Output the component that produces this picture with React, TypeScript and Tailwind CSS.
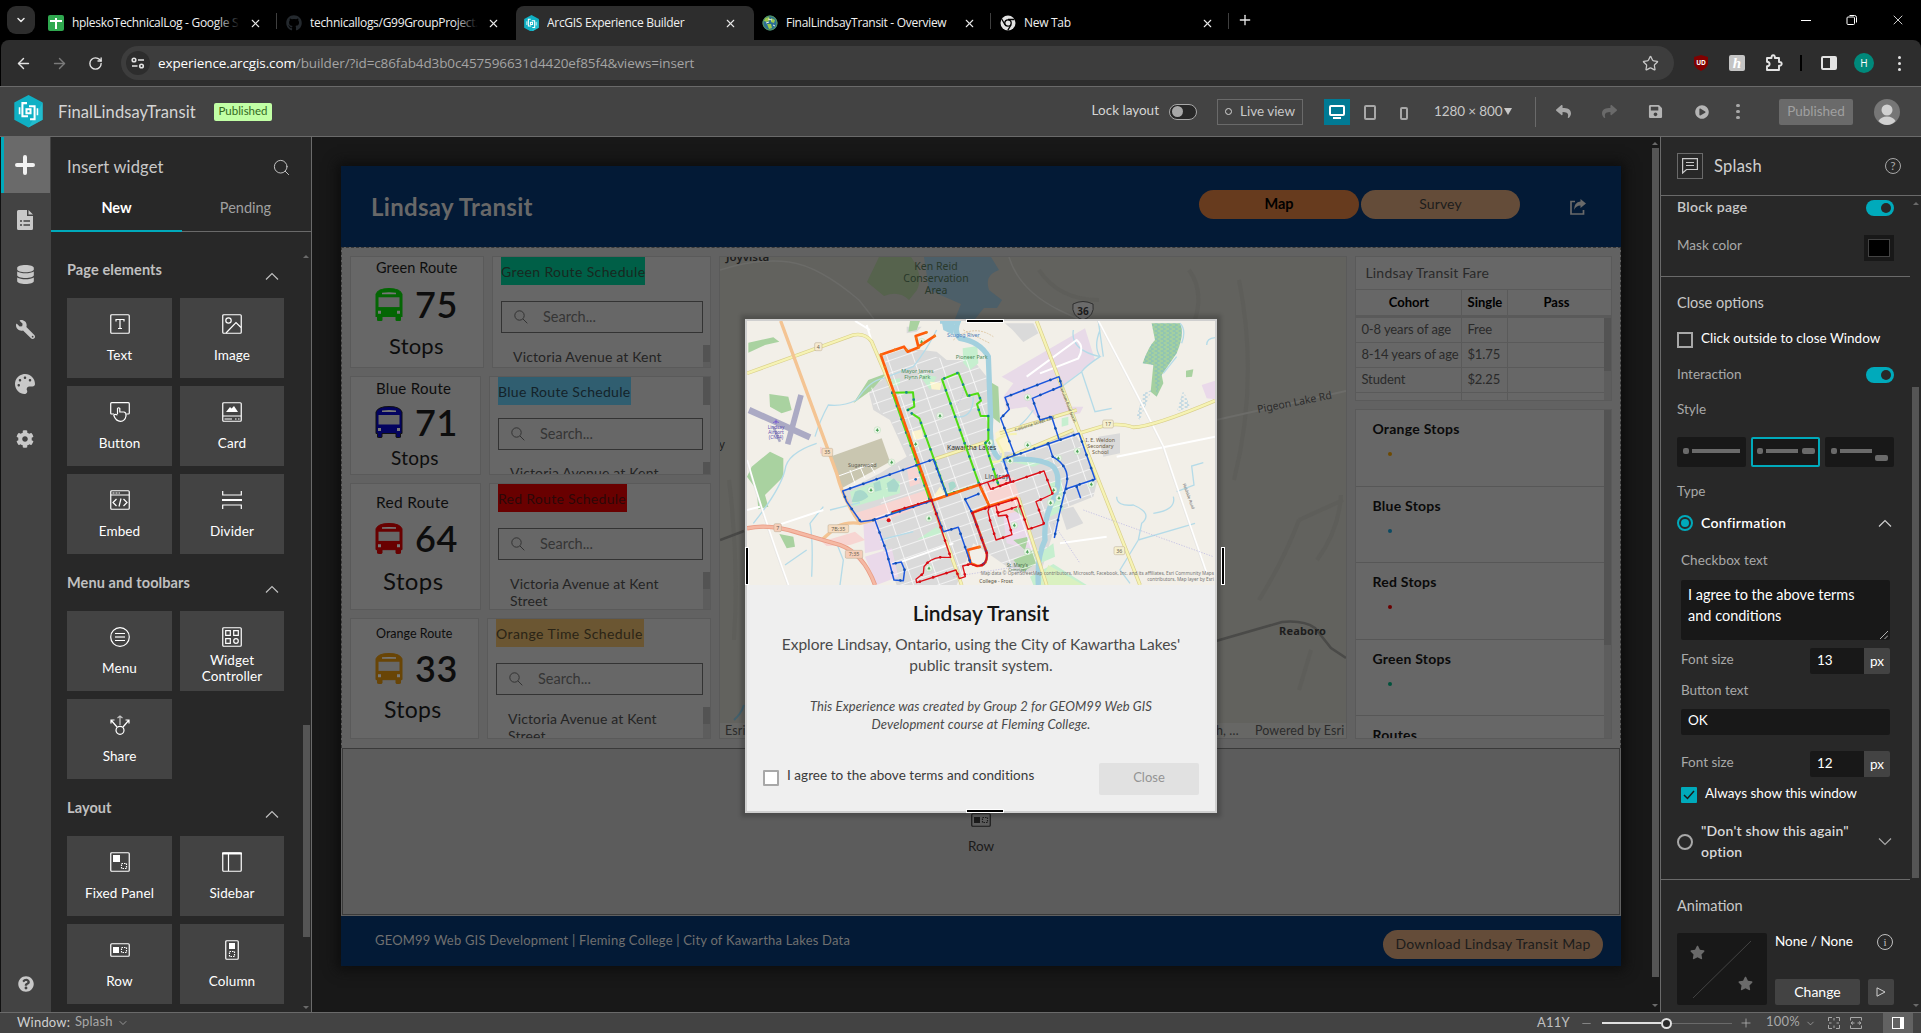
import React from "react";
import { ArrowLeft, ArrowRight, RotateCw, Star, Plus, X, ChevronDown, Search, Minus } from "lucide-react";
import { FaGithub, FaWrench, FaPalette, FaDatabase, FaCog, FaReply, FaShare, FaSave, FaPlayCircle, FaQuestionCircle, FaStar } from "react-icons/fa";

/* ---------- browser chrome ---------- */

function EsriMark({ size }: { size: number }) {
  return (
    <svg width={size} height={size * 1.12} viewBox="0 0 28 32" className="shrink-0">
      <path d="M14 0 L28 7.5 V24.5 L14 32 L0 24.5 V7.5 Z" fill="#0fb0c4" />
      <path d="M14 32 L28 24.5 V7.5 Z" fill="#35c8d8" opacity=".5" />
      <g fill="none" stroke="#fff" strokeWidth="2">
        <path d="M12.500 8 H8 V21 M7 21 H13.500 M15.500 24 H20 V11 M21 11 H14.500" />
        <path d="M5.200 12 V19 M22.800 13 V20" strokeWidth="1.600" />
      </g>
      <rect x="11" y="13" width="6" height="6" fill="#fff" />
      <rect x="13" y="15" width="2" height="2" fill="#0fb0c4" />
    </svg>
  );
}

function SheetsIcon() {
  return (
    <span className="relative h-4 w-4 shrink-0 rounded-[2px] bg-[#2fa84f]">
      <span className="absolute left-[7px] top-[3px] h-[11px] w-[2px] bg-white" />
      <span className="absolute left-[2px] top-[5px] h-[2px] w-3 bg-white" />
    </span>
  );
}

function GlobeIcon() {
  return (
    <svg width="16" height="16" viewBox="0 0 16 16" className="shrink-0">
      <circle cx="8" cy="8" r="7.500" fill="#2b6f93" />
      <path d="M3 3 L7 2 L8 5 L5 7 L2 6 Z M9 3 L13 5 L12 8 L9 7 Z M5 9 L9 9 L10 13 L7 14 Z" fill="#9cc84b" />
      <path d="M4 8 L7 7 M11 10 L13 11 M6 4 L10 5" stroke="#e6eef0" strokeWidth="1" />
      <circle cx="8" cy="8" r="7" fill="none" stroke="#5c9b55" strokeWidth="1" />
    </svg>
  );
}

function ChromeIcon() {
  return (
    <svg width="16" height="16" viewBox="0 0 16 16" className="shrink-0">
      <circle cx="8" cy="8" r="7.500" fill="#e3e3e3" />
      <circle cx="8" cy="8" r="3.200" fill="#e3e3e3" stroke="#000" strokeWidth="1.300" />
      <path d="M8 4.500 H14.500 M5 9.800 L1.700 4 M11 9.800 L7.800 15.400" stroke="#000" strokeWidth="1.300" />
    </svg>
  );
}

function Tab({ icon, title, active, fade, sep }: { icon: React.ReactNode; title: string; active?: boolean; fade?: boolean; sep?: boolean }) {
  return (
    <div className={active ? "relative flex h-[34px] w-[238px] items-center rounded-t-lg bg-[#2d2d2d] pl-2" : "relative flex h-[34px] w-[238px] items-center pl-2"}>
      {icon}
      <div className="relative mb-px ml-2 w-[168px] overflow-hidden whitespace-nowrap text-[12px] tracking-[-0.3px] text-[#f0f0f0]">
        {title}
        {fade && <span className="absolute right-0 top-0 h-full w-6 bg-gradient-to-r from-transparent to-black" />}
      </div>
      <X size={13} strokeWidth={2} className="ml-[9px] text-[#e8e8e8]" />
      {sep && <span className="absolute right-[1px] top-[7px] h-4 w-px bg-[#3f3f3f]" />}
    </div>
  );
}

function Browser() {
  return (
    <div className="font-['Open_Sans',sans-serif]">
      <div className="flex h-10 items-end bg-black">
        <div className="mb-[6px] ml-[7px] flex h-7 w-[28px] items-center justify-center rounded-[9px] bg-[#2d2d2d]">
          <ChevronDown size={12} strokeWidth={3} className="text-[#e8e8e8]" />
        </div>
        <div className="ml-[5px] flex">
          <Tab icon={<SheetsIcon />} title="hpleskoTechnicalLog - Google S" fade sep />
          <Tab icon={<FaGithub size={16} className="shrink-0 text-[#24292e]" />} title="technicallogs/G99GroupProject." fade />
          <Tab icon={<EsriMark size={15} />} title="ArcGIS Experience Builder" active />
          <Tab icon={<GlobeIcon />} title="FinalLindsayTransit - Overview" sep />
          <Tab icon={<ChromeIcon />} title="New Tab" sep />
        </div>
        <Plus size={16} strokeWidth={2} className="mb-[12px] ml-[7px] text-[#e8e8e8]" />
        <div className="ml-auto mr-[15px] flex h-10 items-center text-white">
          <span className="h-px w-[10px] bg-white" />
          <svg width="12" height="12" viewBox="0 0 12 12" fill="none" stroke="#fff" className="ml-[35px]">
            <rect x="1" y="3" width="7.500" height="7.500" rx="1" />
            <path d="M3.500 1.500 H8.500 Q10.500 1.500 10.500 3.500 V8.500" />
          </svg>
          <X size={16} strokeWidth={1.2} className="ml-[32px]" />
        </div>
      </div>
      <div className="bg-black pl-px">
        <div className="flex h-[46px] items-center rounded-t-lg bg-[#2d2d2d] text-[#e3e3e3]">
          <ArrowLeft size={17} strokeWidth={2} className="ml-[14px]" />
          <ArrowRight size={17} strokeWidth={2} className="ml-[19px] text-[#7a7a7a]" />
          <RotateCw size={15} strokeWidth={2.2} className="ml-[20px]" />
          <div className="ml-[18px] flex h-[34px] w-[1553px] items-center rounded-full bg-[#3d3d3d]">
            <span className="ml-[5px] flex h-6 w-6 items-center justify-center rounded-full bg-[#2d2d2d]">
              <svg width="14" height="12" viewBox="0 0 14 12" fill="none" stroke="#e3e3e3" strokeWidth="1.600">
                <circle cx="3" cy="3" r="1.800" /><path d="M7 3 H13 M1 9 H6.500" /><circle cx="10.500" cy="9" r="1.800" />
              </svg>
            </span>
            <span className="ml-[8px] whitespace-nowrap text-[13.5px] tracking-[-0.11px] text-[#a4a4a4]">
              <span className="text-white">experience.arcgis.com</span>/builder/?id=c86fab4d3b0c457596631d4420ef85f4&amp;views=insert
            </span>
            <Star size={17} strokeWidth={1.8} className="ml-auto mr-[15px] text-[#c7c7c7]" />
          </div>
          <svg width="14" height="16" viewBox="0 0 14 16" className="ml-[20px]">
            <path d="M7 0 L14 2 V9 Q13 13 7 16 Q1 13 0 9 V2 Z" fill="#800000" />
            <text x="7" y="9.500" fontSize="6.500" fontWeight="700" fill="#fff" textAnchor="middle" fontFamily="Open Sans">UD</text>
          </svg>
          <span className="ml-[21px] flex h-4 w-4 items-center justify-center rounded-[2px] bg-[#c4c4c4] font-['Liberation_Serif',serif] text-[15px] font-bold italic leading-4 text-white">h</span>
          <svg width="18" height="18" viewBox="0 0 18 18" className="ml-[20px]">
            <path d="M2 4 H6.500 Q6.300 1.300 8.200 1.300 Q10.100 1.300 9.900 4 H14 V8 Q16.700 7.800 16.700 9.800 Q16.700 11.800 14 11.600 V16 H2 V12.300 Q4.600 12 4.600 10 Q4.600 8 2 7.700Z" fill="none" stroke="#e3e3e3" strokeWidth="1.900" strokeLinejoin="round" />
          </svg>
          <span className="ml-[17px] h-4 w-[2px] bg-black" />
          <svg width="16" height="14" viewBox="0 0 16 14" className="ml-[19px]">
            <rect x="1" y="1" width="14" height="12" rx="1" fill="none" stroke="#e3e3e3" strokeWidth="2" />
            <rect x="9" y="1" width="6" height="12" fill="#e3e3e3" />
          </svg>
          <span className="ml-[17px] flex h-5 w-5 items-center justify-center rounded-full bg-[#00897b] text-[10px] text-white">H</span>
          <span className="ml-[24px] flex flex-col gap-[3px]">
            <i className="h-[3px] w-[3px] rounded-full bg-[#e3e3e3]" />
            <i className="h-[3px] w-[3px] rounded-full bg-[#e3e3e3]" />
            <i className="h-[3px] w-[3px] rounded-full bg-[#e3e3e3]" />
          </span>
        </div>
      </div>
    </div>
  );
}

/* ---------- builder header ---------- */

function BuilderHeader() {
  return (
    <div className="flex h-[51px] items-center border-b border-t border-[#6a6a6a] bg-[#434343] text-[#c8c8c8]">
      <span className="ml-[14px] flex"><EsriMark size={29} /></span>
      <span className="ml-[15px] mt-[2px] w-[141px] whitespace-nowrap text-[16.5px] tracking-[0.1px] text-[#d5d5d5]">FinalLindsayTransit</span>
      <span className="ml-[15px] flex h-[18px] w-[58px] items-center justify-center rounded-[2px] bg-[#c1ffa5] pb-px text-[11.5px] text-[#33691e]">Published</span>
      <span className="mb-[3px] ml-auto whitespace-nowrap text-[13.5px] text-[#d5d5d5]">Lock layout</span>
      <span className="ml-[10px] flex h-4 w-[28px] items-center rounded-full border border-[#a8a8a8] bg-[#282828] pl-[2px]">
        <i className="h-[11px] w-[11px] rounded-full bg-[#a8a8a8]" />
      </span>
      <span className="ml-[20px] flex h-[26px] w-[86px] items-center justify-center border border-[#6a6a6a] text-[13.5px]">
        <i className="mr-[8px] h-[7px] w-[7px] rounded-full border border-[#d5d5d5]" />Live view
      </span>
      <span className="ml-[21px] flex h-[26px] w-[26px] items-center justify-center bg-[#007a94]">
        <svg width="16" height="14" viewBox="0 0 16 14"><rect x="1" y="1" width="14" height="9" rx="1" fill="none" stroke="#fff" strokeWidth="2" /><path d="M4 13 H12" stroke="#fff" strokeWidth="2" /></svg>
      </span>
      <i className="ml-[14px] mt-[2px] h-[15px] w-[12px] rounded-[2px] border-2 border-[#a8a8a8]" />
      <i className="ml-[24px] mt-[3px] h-[13px] w-[8px] rounded-[2px] border-2 border-[#a8a8a8]" />
      <span className="ml-[26px] w-[70px] whitespace-nowrap text-[13.5px] tracking-[-0.1px]">1280 × 800</span>
      <i className="border-x-[4px] border-t-[7px] border-x-transparent border-t-[#c8c8c8]" />
      <i className="ml-[23px] h-[30px] w-px bg-[#6a6a6a]" />
      <FaReply size={15} className="ml-[20px] text-[#a8a8a8]" />
      <FaShare size={15} className="ml-[31px] text-[#6a6a6a]" />
      <FaSave size={15} className="ml-[31px] text-[#b4b4b4]" />
      <FaPlayCircle size={14} className="ml-[32px] text-[#b4b4b4]" />
      <span className="ml-[27px] flex flex-col gap-[3px]">
        <i className="h-[3px] w-[4px] rounded-full bg-[#a8a8a8]" />
        <i className="h-[3px] w-[4px] rounded-full bg-[#a8a8a8]" />
        <i className="h-[3px] w-[4px] rounded-full bg-[#a8a8a8]" />
      </span>
      <span className="ml-[39px] flex h-[26px] w-[74px] items-center justify-center rounded-[2px] bg-[#6a6a6a] pb-px text-[13.5px] text-[#a0a0a0]">Published</span>
      <svg width="26" height="26" viewBox="0 0 26 26" className="ml-[21px] mr-[21px]">
        <circle cx="13" cy="13" r="13" fill="#767676" />
        <circle cx="13" cy="11" r="5.500" fill="#d0d0d0" />
        <path d="M4.500 22 Q7 17.500 13 17.500 Q19 17.500 21.500 22 Q18 26 13 26 Q8 26 4.500 22Z" fill="#d0d0d0" />
      </svg>
    </div>
  );
}

/* ---------- left side ---------- */

function Rail() {
  return (
    <div className="flex w-[51px] shrink-0 flex-col border-l border-[#111] bg-[#434343] text-[#c8c8c8]">
      <div className="flex h-[56px] w-[49px] items-center justify-center border-l-[3px] border-[#00aabb] bg-[#6a6a6a] pr-[4px]">
        <svg width="20" height="20" viewBox="0 0 20 20"><path d="M10 2 V18 M2 10 H18" stroke="#f2f2f2" strokeWidth="4" strokeLinecap="round" /></svg>
      </div>
      <div className="flex h-[54px] w-[48px] items-center justify-center">
        <svg width="16" height="20" viewBox="0 0 16 20">
          <path d="M1.500 0 H10 V6 H16 V18.500 Q16 20 14.500 20 H1.500 Q0 20 0 18.500 V1.500 Q0 0 1.500 0Z M11.500 0 L16 4.500 H11.500Z" fill="#c8c8c8" />
          <path d="M3 11 H5 M6.500 11 H13 M3 15 H5 M6.500 15 H13" stroke="#434343" strokeWidth="1.500" />
        </svg>
      </div>
      <div className="flex h-[55px] w-[48px] items-center justify-center"><FaDatabase size={19} /></div>
      <div className="flex h-[54px] w-[48px] items-center justify-center"><span className="-scale-x-100"><FaWrench size={19} /></span></div>
      <div className="flex h-[55px] w-[48px] items-center justify-center"><FaPalette size={20} /></div>
      <div className="flex h-[55px] w-[48px] items-center justify-center"><FaCog size={18} /></div>
      <div className="mb-[20px] ml-[17px] mt-auto"><FaQuestionCircle size={16} /></div>
    </div>
  );
}

const box = <rect x=".75" y=".75" width="18.500" height="18.500" rx="1" />;
const GLYPHS: Record<string, React.ReactNode> = {
  Text: <>{box}<path d="M6 7.500 V5.500 H14 V7.500 M10 5.500 V14.500 M8 14.500 H12" /></>,
  Image: <>{box}<circle cx="6.500" cy="6.500" r="2.700" /><path d="M4 19 L14 8.500 L19 13.500" /></>,
  Button: <><path d="M4 12 H1.700 Q.7 12 .7 11 V1.700 Q.7 .7 1.700 .7 H18.300 Q19.300 .7 19.300 1.700 V11 Q19.300 12 18.300 12 H16.500" /><path d="M7.500 12 V6.500 Q8.500 5 9.800 6.500 V10 H14 Q16.500 10.500 16 14 Q15 19.300 10.500 19.300 Q6 19.300 3.800 13.500 Q4.500 11.500 7.500 13" /></>,
  Card: <>{box}<path d="M4 10 L8 5 L9.500 6.500 L12 4 L16 10Z" fill="currentColor" stroke="none" /><path d="M1 14 H19 M2.500 17 H10 M13 17 H14.500 M16 17 H17.500" /></>,
  Embed: <>{box}<path d="M1 5 H19 M2.500 3 H4.500 M5.500 3 H7.500 M8.500 3 H10" /><path d="M6.500 9 L3 12.500 L6.500 16 M13.500 9 L17 12.500 L13.500 16 M11 8.500 L9 16.500" /></>,
  Divider: <><path d="M.7 1 V5 H19.300 V1 M.7 19 V15 H19.300 V19" /><path d="M0 10 H20" strokeWidth="2" /></>,
  Menu: <><circle cx="10" cy="10" r="9.300" /><path d="M5 6.500 H15 M5 13.500 H15" /><path d="M5 10 H15" strokeWidth="2" opacity=".6" /></>,
  Widget: <>{box}<path d="M3.700 3.700 H8.300 V8.300 H3.700Z M11.700 3.700 H16.300 V8.300 H11.700Z M3.700 11.700 H8.300 V16.300 H3.700Z" /><circle cx="14" cy="14" r="2.300" /></>,
  Share: <><circle cx="10" cy="15.300" r="4" /><path d="M7 12 L1 5 M1 8.500 V5 H4.500 M13 12 L19 5 M19 8.500 V5 H15.500" /><path d="M10 10 V1.500 M7.500 3 L10 1 L12.500 3" opacity=".7" /></>,
  Fixed: <>{box}<path d="M3 3 H10 V10 H3Z" fill="currentColor" stroke="none" /><rect x="11.500" y="11.500" width="5" height="5" strokeDasharray="1.500 1" /></>,
  Sidebar: <>{box}<path d="M0 1.500 H20" strokeWidth="2" /><path d="M6.500 1 V19" /></>,
  Row: <><rect x=".75" y="3.750" width="18.500" height="12.500" rx="1" /><path d="M3 7 H9 V13 H3Z" fill="currentColor" stroke="none" /><rect x="11.500" y="7.500" width="5" height="5" strokeDasharray="1.500 1" /></>,
  Column: <><rect x="3.750" y=".75" width="12.500" height="18.500" rx="1" /><path d="M7 3 H13 V9 H7Z" fill="currentColor" stroke="none" /><rect x="7.500" y="11.500" width="5" height="5" strokeDasharray="1.500 1" /></>,
};

function Glyph({ name }: { name: string }) {
  return (
    <svg width="20" height="20" viewBox="0 0 20 20" fill="none" stroke="currentColor" strokeWidth="1.200" className="shrink-0">
      {GLYPHS[name]}
    </svg>
  );
}

function Tile({ g, label }: { g: string; label: string }) {
  return (
    <div className="flex h-20 flex-col items-center bg-[#434343] pt-4 text-white">
      <Glyph name={g} />
      <div className="mt-[5px] flex h-8 w-[80px] items-center justify-center text-center text-[13.5px] leading-4 tracking-[0.1px]">{label}</div>
    </div>
  );
}

function Section({ title, tiles }: { title: string; tiles: [string, string][] }) {
  return (
    <div>
      <div className="flex h-[57px] items-center justify-between pr-[6px]">
        <span className="text-[14.5px] font-bold tracking-[0.1px] text-[#c0c0c0]">{title}</span>
        <svg width="14" height="8" viewBox="0 0 14 8" className="mt-[12px]"><path d="M1 7.500 L7 1.500 L13 7.500" fill="none" stroke="#c0c0c0" strokeWidth="1.200" /></svg>
      </div>
      <div className="grid grid-cols-[105px_104px] gap-2">
        {tiles.map(([g, l]) => <Tile key={l} g={g} label={l} />)}
      </div>
    </div>
  );
}

function InsertPanel() {
  return (
    <div className="flex w-[261px] shrink-0 flex-col border-r border-[#6a6a6a] bg-[#282828]">
      <div className="flex h-[60px] items-center justify-between pl-4 pr-[20px] pt-px">
        <span className="text-[16.5px] tracking-[0.15px] text-[#c8c8c8]">Insert widget</span>
        <Search size={19} strokeWidth={1.2} className="text-[#c8c8c8]" />
      </div>
      <div className="flex h-[35px] text-[14.5px]">
        <div className="flex w-[131px] items-start justify-center border-b-2 border-[#00aabb] font-bold text-white">New</div>
        <div className="flex flex-1 items-start justify-center border-b border-[#6a6a6a] pr-[2px] text-[#a0a0a0]">Pending</div>
      </div>
      <div className="flex min-h-0 flex-1 overflow-hidden">
        <div className="w-[234px] pl-4 pt-[9px]">
          <Section title="Page elements" tiles={[["Text", "Text"], ["Image", "Image"], ["Button", "Button"], ["Card", "Card"], ["Embed", "Embed"], ["Divider", "Divider"]]} />
          <Section title="Menu and toolbars" tiles={[["Menu", "Menu"], ["Widget", "Widget Controller"], ["Share", "Share"]]} />
          <Section title="Layout" tiles={[["Fixed", "Fixed Panel"], ["Sidebar", "Sidebar"], ["Row", "Row"], ["Column", "Column"]]} />
        </div>
        <div className="ml-auto mr-px flex w-[8px] flex-col items-center">
          <i className="mt-[23px] border-x-[3px] border-b-[3px] border-x-transparent border-b-[#6a6a6a]" />
          <i className="mt-[467px] h-[212px] w-[7px] bg-[#555]" />
          <i className="mt-[69px] border-x-[3px] border-t-[3px] border-x-transparent border-t-[#6a6a6a]" />
        </div>
      </div>
    </div>
  );
}

/* ---------- page under the mask ---------- */

function Bus({ color, edge, h }: { color: string; edge: string; h: number }) {
  return (
    <svg width="28" height={h} viewBox="0 0 28 32" preserveAspectRatio="none">
      <path d="M1 6 Q3 .5 14 .5 Q25 .5 27 6 V27.500 H25.500 V31 Q25.500 31.500 24.500 31.500 H22 Q21 31.500 21 31 V27.500 H7 V31 Q7 31.500 6 31.500 H3.500 Q2.500 31.500 2.500 31 V27.500 H1Z" fill={color} stroke={edge} />
      <path d="M3.500 9 H24.500 V18.500 H3.500Z" fill="#676767" />
      <path d="M7 4.500 Q14 3.500 21 4.500 V6 H7Z M3 22 H6 V25 H3Z M22 22 H25 V25 H22Z" fill="#777" />
    </svg>
  );
}

type RouteProps = {
  name: string; nameCls: string; num: string; stopsCls: string; fill: string; edge: string; bus: number;
  cardCls: string; rowCls: string; numCls: string; schedule: string; labelCls: string; searchCls: string; body: string; bodyCls: string; thumb: string; topThumb?: boolean;
};

function RouteRow(p: RouteProps) {
  return (
    <div className={p.rowCls}>
      <div className={p.cardCls}>
        <div className={p.nameCls}>{p.name}</div>
        <div className={p.numCls}>
          <Bus color={p.fill} edge={p.edge} h={p.bus} />
          <span className="ml-[12px] text-[36px] font-semibold leading-[32px] tracking-[0.5px]">{p.num}</span>
        </div>
        <div className={p.stopsCls}>Stops</div>
      </div>
      <div className="relative flex-1 overflow-hidden border border-[#5a5a5a] bg-[#676767] pl-2">
        <div className={p.labelCls}>{p.schedule}</div>
        <div className={p.searchCls}>
          <svg width="14" height="14" viewBox="0 0 14 14" fill="none" stroke="#333" className="ml-[12px]"><circle cx="5.500" cy="5.500" r="4.700" /><path d="M9 9 L13.300 13.300" /></svg>
          <span className="ml-[15px] text-[14.5px] text-[#353535]">Search...</span>
        </div>
        <div className={p.bodyCls}>{p.body}</div>
        {p.topThumb && <i className="absolute right-0 top-0 h-[28px] w-[7px] bg-[#535353]" />}
        <span className={p.thumb}><i className="h-[17px] bg-[#535353]" /></span>
      </div>
    </div>
  );
}

function PageMap() {
  return (
    <svg width="626" height="481" viewBox="721 257 626 481" className="block" fontFamily="Noto Sans, sans-serif">
      <rect x="721" y="257" width="626" height="481" fill="#62625e" />
      <g stroke="#5d5d59" strokeWidth="4" fill="none" opacity=".7">
        <path d="M1190 270 Q1205 290 1196 320 M1240 280 Q1260 380 1235 480 M1300 520 L1344 500 M1318 560 Q1340 530 1342 495 M1300 690 L1312 650 M1260 600 Q1285 560 1300 520 M1040 270 Q1060 300 1100 300 M730 480 Q740 560 735 640" />
      </g>
      <path d="M880 257 H912 Q925 275 918 290 L910 300 Q900 290 885 296 L868 282 Z" fill="#56634d" />
      <path d="M925 257 H992 L1000 270 Q985 275 990 290 L1003 300 L998 308 H985 L976 319 H956 L962 304 L930 290 Z" fill="#4c5f69" />
      <path d="M721 270 Q760 258 790 262 T860 300 L875 319 M1010 257 Q1020 290 1060 310 T1200 360" fill="none" stroke="#6b6b68" strokeWidth="1.500" />
      <path d="M1217 420 L1347 391" stroke="#6c6c69" strokeWidth="2" />
      <path d="M721 540 L745 531" stroke="#484846" strokeWidth="2.500" />
      <path d="M1217 641 L1283 622 Q1305 620 1316 628 L1332 648 L1347 658" stroke="#4a4a48" strokeWidth="2.500" fill="none" />
      <path d="M735 720 Q742 714 745 705" stroke="#42606d" strokeWidth="2" fill="none" />
      <path d="M1074 304 Q1084 299 1094 304 Q1096 316 1084 320 Q1072 316 1074 304Z" fill="#6b6b6b" stroke="#2f2f2f" />
      <g fill="#1d1d1d" fontSize="11.500">
        <text x="727" y="261" fontWeight="600">Joyvista</text>
        <g fill="#28382a" textAnchor="middle" fontSize="10.500">
          <text x="937" y="270">Ken Reid</text><text x="937" y="282">Conservation</text><text x="937" y="294">Area</text>
        </g>
        <text x="1084" y="315" textAnchor="middle" fontSize="10" fontWeight="700">36</text>
        <text x="1259" y="413" transform="rotate(-11 1259 413)" fill="#2b2b2b" fontSize="10.500">Pigeon Lake Rd</text>
        <text x="1280" y="635" fontWeight="700" letterSpacing=".2" fontSize="11">Reaboro</text>
        <text x="720" y="448">y</text>
      </g>
      <rect x="721" y="723" width="626" height="15" fill="#676765" />
      <g fill="#2b2b2b" fontSize="12.500" fontFamily="Lato" letterSpacing=".1">
        <text x="726" y="735">Esri</text><text x="1217" y="735">h, …</text><text x="1256" y="735">Powered by Esri</text>
      </g>
    </svg>
  );
}

function FareTable() {
  const rows = [["0-8 years of age", "Free"], ["8-14 years of age", "$1.75"], ["Student", "$2.25"], ["", ""]];
  return (
    <div className="h-[145px] overflow-hidden border border-[#5a5a5a] bg-[#676767] text-[13px] text-[#2a2a2a]">
      <div className="flex h-[32px] items-center pb-[2px] pl-[9px] text-[14px] tracking-[0.2px]">Lindsay Transit Fare</div>
      <div className="flex h-[29px] border-b-[3px] border-t border-[#5a5a5a] font-bold text-black">
        <div className="flex w-[106px] items-center justify-center border-r border-[#5a5a5a]">Cohort</div>
        <div className="flex w-[46px] items-center justify-center border-r border-[#5a5a5a]">Single</div>
        <div className="flex w-[96px] items-center justify-center">Pass</div>
      </div>
      <div className="flex">
        <div className="flex-1">
          {rows.map(([a, b], i) => (
            <div key={i} className="flex h-[25px] border-b border-[#5a5a5a] tracking-[-0.1px]">
              <div className="flex w-[106px] items-center whitespace-nowrap border-r border-[#5a5a5a] pl-[5px]">{a}</div>
              <div className="flex w-[46px] items-center border-r border-[#5a5a5a] pl-[5px]">{b}</div>
            </div>
          ))}
        </div>
        <div className="w-[7px] bg-[#5d5d5d]"><div className="h-[53px] bg-[#535353]" /></div>
      </div>
    </div>
  );
}

function Legend() {
  const items = [["Orange Stops", "bg-[#6e4a00]"], ["Blue Stops", "bg-[#0b4a63]"], ["Red Stops", "bg-[#6b0000]"], ["Green Stops", "bg-[#00523c]"], ["Routes", "bg-transparent"]];
  return (
    <div className="flex h-[330px] overflow-hidden border border-[#5a5a5a] bg-[#676767]">
      <div className="flex-1">
        {items.map(([t, c]) => (
          <div key={t} className="h-[76.5px] border-b border-[#575757] pl-[16px] pt-[9px]">
            <div className="text-[14px] font-bold leading-[20px] tracking-[0.25px] text-[#0a0a0a]">{t}</div>
            <i className={`ml-[16px] mt-[13px] block h-1 w-1 rounded-full ${c}`} />
          </div>
        ))}
      </div>
      <div className="w-[7px] bg-[#5d5d5d]"><div className="h-[235px] bg-[#535353]" /></div>
    </div>
  );
}

const THUMB = "absolute right-0 bottom-0 flex w-[7px] flex-col bg-[#5d5d5d]";

function PreviewPage() {
  return (
    <div className="flex h-[800px] w-[1280px] flex-col bg-[#606060] shadow-[0_0_12px_4px_#0d0d0d]">
      <div className="flex h-[81px] items-center bg-[#031a36]">
        <span className="ml-[30px] text-[24px] font-bold tracking-[0.3px] text-[#686868]">Lindsay Transit</span>
        <span className="mb-[4px] ml-auto flex h-[29px] w-[160px] items-center justify-center rounded-full bg-[#673b1e] pb-[2px] text-[14.5px] font-bold text-black">Map</span>
        <span className="mb-[4px] ml-[2px] flex h-[29px] w-[159px] items-center justify-center rounded-full bg-[#644c39] pb-[2px] text-[14px] tracking-[0.1px] text-[#1c1c1c]">Survey</span>
        <svg width="16" height="16" viewBox="0 0 16 16" className="ml-[50px] mr-[35px]">
          <path d="M5 2.500 H1 V15 H13.500 V11" fill="none" stroke="#6a6a6a" strokeWidth="1.700" />
          <path d="M10.500 0 L16 4.500 L10.500 9 V6.500 Q6 6.500 4 11 Q4 3 10.500 2.500Z" fill="#6a6a6a" />
        </svg>
      </div>
      <div className="flex h-[501px] gap-2 border border-b-0 border-dashed border-[#383838] bg-[#626262] px-2 pt-[8px]">
        <div className="flex w-[362px] flex-col gap-2">
          <RouteRow name="Green Route" num="75" schedule="Green Route Schedule" fill="#046604" edge="#046604" bus={33}
            rowCls="flex h-[112px] gap-2" cardCls="w-[134px] border border-[#5a5a5a] bg-[#676767] text-[#0d0d0d]"
            nameCls="mt-px pl-[25px] text-[14.5px] leading-[20px] tracking-[0.1px]" numCls="mt-[9px] flex h-[34px] items-center pl-[24px]"
            stopsCls="pt-[11px] pl-[38px] text-[22px] leading-[28px] tracking-[0.2px]"
            labelCls="h-[28px] w-[144px] whitespace-nowrap bg-[#005f47] text-[14px] leading-[29px] tracking-[0.38px] text-[#182820]"
            searchCls="mt-4 flex h-[32px] w-[202px] items-center border border-[#333]"
            body="Victoria Avenue at Kent" bodyCls="ml-[12px] mt-[15px] text-[14px] leading-[17px] tracking-[0.15px] text-[#242424]" thumb={`${THUMB} h-[22px]`} />
          <RouteRow name="Blue Route" num="71" schedule="Blue Route Schedule" fill="#030360" edge="#111" bus={32} topThumb
            rowCls="flex h-[99px] gap-2" cardCls="w-[131px] border border-[#5a5a5a] bg-[#676767] text-[#0d0d0d]"
            nameCls="mt-px pl-[25px] text-[15px] leading-[20px] tracking-[0.3px]" numCls="mt-[7px] flex h-[34px] items-center pl-[24px]"
            stopsCls="pt-[6px] pl-[40px] text-[19px] leading-[26px] tracking-[0.3px]"
            labelCls="h-[28px] w-[133px] whitespace-nowrap bg-[#305e70] text-[14px] leading-[29px] tracking-[0.3px] text-[#14232a]"
            searchCls="mt-[13px] flex h-[32px] w-[205px] items-center border border-[#333]"
            body="Victoria Avenue at Kent" bodyCls="ml-[12px] mt-[14px] text-[14px] leading-[17px] tracking-[0.15px] text-[#242424]" thumb={`${THUMB} h-[12px]`} />
          <RouteRow name="Red Route" num="64" schedule="Red Route Schedule" fill="#690000" edge="#690000" bus={31}
            rowCls="flex h-[127px] gap-2" cardCls="w-[131px] border border-[#5a5a5a] bg-[#676767] text-[#0d0d0d]"
            nameCls="mt-[8px] pl-[25px] text-[15.5px] leading-[20px] tracking-[0.3px]" numCls="mt-[9px] flex h-[34px] items-center pl-[24px]"
            stopsCls="pt-[12px] pl-[32px] text-[24px] leading-[28px] tracking-[0.4px]"
            labelCls="h-[28px] w-[129px] whitespace-nowrap bg-[#690000] text-[14px] leading-[29px] tracking-[0.28px] text-[#2c0808]"
            searchCls="mt-4 flex h-[32px] w-[205px] items-center border border-[#333]"
            body="Victoria Avenue at Kent Street" bodyCls="ml-[12px] w-[160px] mt-[15px] text-[14px] leading-[17px] tracking-[0.15px] text-[#242424]" thumb={`${THUMB} h-[37px]`} />
          <RouteRow name="Orange Route" num="33" schedule="Orange Time Schedule" fill="#694506" edge="#694506" bus={31}
            rowCls="flex h-[121px] gap-2" cardCls="w-[129px] border border-[#5a5a5a] bg-[#676767] text-[#0d0d0d]"
            nameCls="mt-[5px] pl-[25px] text-[12.5px] leading-[20px]" numCls="mt-[7px] flex h-[34px] items-center pl-[24px]"
            stopsCls="pt-[10px] pl-[33px] text-[23px] leading-[28px] tracking-[0.3px]"
            labelCls="h-[28px] w-[148px] whitespace-nowrap bg-[#6b5632] text-[14px] leading-[29px] tracking-[0.42px] text-[#2a2416]"
            searchCls="mt-4 flex h-[32px] w-[207px] items-center border border-[#333]"
            body="Victoria Avenue at Kent Street" bodyCls="ml-[12px] w-[160px] mt-[15px] text-[14px] leading-[17px] tracking-[0.15px] text-[#242424]" thumb={`${THUMB} h-[31px]`} />
        </div>
        <div className="h-[483px] w-[628px] border border-[#5a5a5a]"><PageMap /></div>
        <div className="flex w-[257px] flex-col gap-2">
          <FareTable />
          <Legend />
        </div>
      </div>
      <div className="mx-px flex h-[167px] flex-col items-center border border-[#3a3a3a] bg-[#5c5c5c] pt-[61px] text-[#1a1a1a]">
        <Glyph name="Row" />
        <span className="mt-[7px] text-[13.5px] leading-[18px]">Row</span>
      </div>
      <div className="mt-px flex h-[50px] items-center bg-[#031a36]">
        <span className="ml-[34px] whitespace-nowrap text-[13px] tracking-[0.2px] text-[#707070]">GEOM99 Web GIS Development | Fleming College | City of Kawartha Lakes Data</span>
        <span className="ml-auto mr-[18px] mt-[7px] flex h-[29px] w-[220px] items-center justify-center whitespace-nowrap rounded-full bg-[#644c39] pb-[3px] text-[14px] tracking-[0.25px] text-[#1c1c1c]">Download Lindsay Transit Map</span>
      </div>
    </div>
  );
}

/* ---------- splash window ---------- */

const ORANGE = ["M560 67 L527 78 L535 110 L587 76", "M537 112 L503 125 L492 110 L422 134 L575 572 L718 524 L748 588 L832 563", "M748 588 L697 608 L740 728 Q745 767 712 768 L692 760 L682 720 L722 710"];
const GREEN = ["M457 248 L519 247 L523 290 L500 302", "M515 310 L538 325 L620 554 L718 524 L606 208 L655 188 L683 258 L714 250 L723 272 L711 282 L722 318 L745 318 L745 390 L735 400 L776 526", "M457 248 L570 572 L455 609"];
const BLUE = ["M620 555 L580 448 L308 543 L320 575 L362 635 L402 630 L575 572", "M575 570 L610 665 L655 652 L692 760", "M404 628 L438 720 L462 810 L490 812 L494 780 L484 756 L457 762", "M715 552 L675 568 L697 610 L740 728 Q745 760 718 768", "M812 515 L790 448 L1017 370 L1065 508 L975 538", "M823 433 L782 325 L808 298 L795 262 L957 200 L965 228 L877 265 L900 330 L935 320 L957 388", "M925 400 L938 440 Q990 470 980 520 L957 616 L943 684", "M1010 530 L1022 565"];
const RED = ["M575 572 L632 742 L600 742 Q570 745 552 770 L550 790 L528 808 L530 818 L648 780 L658 806 L676 800 L668 768 L692 762", "M720 524 L806 495 L812 515 L752 538 L742 515", "M780 528 L912 483 L938 552 L888 575 L912 642 L864 658 L832 565 L697 608 L740 728 Q745 768 710 768 L692 762", "M748 590 L744 605 L750 630 L768 690 L816 674 L800 615 L775 618 L768 588", "M775 608 L832 590", "M575 570 L455 606"];

function Route({ d, color, w, dots }: { d: string[]; color: string; w: number; dots: string }) {
  return (
    <g fill="none" strokeLinejoin="round">
      {d.map((p) => <path key={p} d={p} stroke={color} strokeWidth={w} />)}
      {d.map((p) => <path key={p + "s"} d={p} stroke={dots} strokeWidth="8" strokeDasharray="0.100 42" strokeLinecap="round" />)}
    </g>
  );
}

function Badge({ x, y, t, fill }: { x: number; y: number; t: string; fill: string }) {
  return (
    <g>
      <rect x={x - 6 - t.length * 5} y={y - 12} width={12 + t.length * 10} height="24" rx="4" fill={fill} stroke="#b9ab93" strokeWidth="1.500" />
      <text x={x} y={y + 6} textAnchor="middle" fontSize="16" fill="#6a5f50">{t}</text>
    </g>
  );
}

function CityMap() {
  const trees = [[545, 95], [600, 317], [412, 360], [527, 402], [455, 457], [393, 540], [567, 625], [567, 775], [863, 262], [863, 405], [748, 398], [810, 452], [955, 445], [1012, 424], [1054, 523], [941, 540], [957, 564], [932, 578], [823, 646], [862, 725]];
  return (
    <svg width="468" height="264" viewBox="21 33 1404 792" className="block" fontFamily="Noto Sans, sans-serif">
      <defs>
        <pattern id="streets" width="74" height="36" patternUnits="userSpaceOnUse" patternTransform="rotate(-19)">
          <path d="M0 1 H74 M1 0 V36" stroke="#fff" strokeWidth="3" fill="none" />
        </pattern>
        <pattern id="marsh" width="18" height="12" patternUnits="userSpaceOnUse">
          <path d="M2 3 H11 M9 9 H17" stroke="#6aaed6" strokeWidth="2" />
        </pattern>
      </defs>
      <rect x="21" y="33" width="1404" height="792" fill="#f2efe8" />
      <path d="M422 140 L500 115 L590 125 L620 150 L700 150 L740 200 L752 300 L765 420 L830 430 L1000 360 L1075 500 L1060 560 L960 600 L905 780 L830 790 L700 700 L650 825 L470 825 L400 640 L340 620 L310 545 L420 490 L500 440 L450 330 L400 300 L385 240 L440 200Z" fill="#dadada" />
      <path d="M500 50 L545 50 L530 65 L500 70Z M795 40 L880 40 L895 70 L850 96 L818 60Z M1075 380 L1140 370 L1140 430 L1090 440Z M960 600 L1000 590 L1030 640 L980 660Z" fill="#dadada" />
      <path d="M785 200 L1035 55 L1065 150 L965 230 L990 290 L1030 290 L1020 310 L900 330 L860 290 L800 300 L790 260 L820 220Z" fill="#e8dae8" />
      <path d="M1385 225 L1425 212 V268 L1400 265Z M375 740 L455 715 L475 800 L410 825Z M770 470 L860 640 L880 720 L800 700Z M370 640 L410 630 L440 715 L375 730Z" fill="#ead9ea" />
      <path d="M345 610 L560 540 L575 575 L440 630 L370 632Z M245 695 L345 665 L375 690 L330 705 L260 708Z M500 470 L530 460 L540 520 L510 530Z M730 530 L820 500 L850 600 L770 620Z M240 410 L270 420 L270 440 L240 430Z" fill="#f7d5d2" />
      <path d="M270 440 L425 385 L450 455 L305 535 L290 500Z" fill="#c9c6b0" />
      <path d="M290 500 L400 460 M330 480 L345 520 M360 470 L375 505 M390 465 L405 490" stroke="#fff" strokeWidth="3" />
      <path d="M25 98 L100 82 L118 95 L75 105 L25 128Z M88 252 L145 260 L155 300 L125 310 L90 290Z M35 470 L90 425 L130 445 L130 500 L75 555 L85 590 L55 598 L50 540 L21 500Z M118 672 L160 680 L165 710 L140 715Z M510 33 L540 33 L530 60 L505 65Z M750 215 L775 230 L780 340 L755 320Z M820 600 L845 570 L850 620Z M820 690 L865 680 L855 720Z M340 280 L385 210 L440 190 L395 240Z M1338 182 L1360 178 L1356 200 L1338 202Z M820 750 L880 720 L890 760 L850 785Z" fill="#a9d2a0" />
      <path d="M1235 40 H1320 Q1335 70 1310 130 L1265 195 L1270 220 L1250 260 L1232 245 L1240 165 L1208 160 Q1225 110 1245 90Z" fill="#a4d0a0" />
      <path d="M1235 40 H1320 Q1335 70 1310 130 L1265 195 L1250 260 L1240 165 L1208 160 Q1225 110 1245 90Z M1210 250 L1235 240 L1200 330 L1190 320Z M1330 240 L1350 290 L1310 305Z" fill="url(#marsh)" />
      <path d="M330 545 L440 500 L480 515 L480 550 L340 590Z M668 115 L712 108 L715 160 L690 180 L670 160Z M925 520 L965 510 L970 600 L930 620Z M535 190 L590 200 L570 240Z M445 210 L480 205 L480 225 L455 230Z M870 800 L940 762 L1040 825 H880Z M530 690 L590 650 L610 670Z M900 730 L940 700 L945 740 L900 760Z M815 455 L930 450 L880 470Z M965 325 L985 320 L985 345 L965 350Z" fill="#c6efcf" />
      <path d="M925 765 L1030 825 H900Z" fill="#daf1c0" />
      <path d="M570 215 L605 218 L600 240 L575 238Z M515 365 L545 358 L550 385 L520 390Z M580 560 L600 530 L620 560Z M765 370 L790 350 L815 420 L780 430Z" fill="#fbf4cf" />
      <path d="M422 140 L500 115 L620 150 L700 150 L740 200 L765 420 L830 430 L1000 360 L1075 500 L1060 560 L960 600 L905 760 L830 790 L700 700 L650 825 L470 825 L400 640 L460 480 L510 440 L450 330 L385 270 L385 240 L440 200Z" fill="url(#streets)" opacity=".85" />
      <path d="M345 545 Q370 530 385 560 Q360 580 335 575Z M400 520 L420 512 L425 540 L405 545Z M440 520 L462 505 L478 525 L470 545 L445 545Z M625 520 Q645 505 648 530 L630 545Z" fill="#a8d8cb" />
      <g fill="none" stroke="#b5dbe8" strokeWidth="4">
        <path d="M590 60 Q560 120 520 170 Q470 190 430 205 Q390 210 350 270 Q310 290 265 285 Q240 330 225 380 M230 400 Q140 430 135 480 Q120 540 40 640 M250 590 L210 640 Q220 690 215 800 M270 600 L360 578 M290 700 L310 750 L300 825 M135 765 L200 720 M1000 60 Q990 120 1080 140 Q1035 170 1025 185 L965 230 M1025 185 L1065 305 L1115 295 M1080 60 Q1060 110 1080 140 M1075 33 L1090 140 M1325 100 Q1340 60 1320 40 M1310 140 L1270 190 M1400 105 Q1400 85 1425 83 M1130 560 Q1130 590 1180 585 Q1240 610 1205 640 L1195 690 L1365 640 M1300 560 Q1310 600 1240 610 M1390 458 L1355 468 L1362 525 L1310 545 M1195 690 L1140 780 L1170 820 M420 690 L520 665 M840 345 Q860 330 880 300 M640 320 Q700 330 700 260" />
        <path d="M640 90 Q700 40 760 80 M670 60 L750 100" stroke="#dcc49d" strokeWidth="2.500" strokeDasharray="6 3" />
      </g>
      <path d="M600 33 H655 Q640 65 660 85 Q720 95 745 140 L752 330 Q745 440 790 450 Q900 440 940 470 Q965 500 945 560 Q910 620 915 690 Q890 740 895 825" fill="none" stroke="#a3d0de" strokeWidth="16" />
      <path d="M605 33 H645 L640 75 L610 60Z" fill="#a3d0de" />
      <g stroke="#abaac4" fill="none">
        <path d="M27 300 L210 382" strokeWidth="19" /><path d="M183 255 L143 403" strokeWidth="17" /><path d="M100 350 L120 395" strokeWidth="8" />
      </g>
      <g fill="none" stroke="#fff" strokeWidth="6">
        <path d="M21 450 Q70 620 145 825 M1075 33 Q1200 270 1270 410 Q1320 560 1400 790 M345 33 L390 60 M21 600 L60 590 M100 650 L250 600 M380 45 L400 110 M1130 440 L1425 380 M960 700 L1100 680 M470 760 L640 700 M860 200 L1010 90 Q1035 110 1015 145 L900 190" />
      </g>
      <g fill="none" stroke="#c9c9c9" strokeWidth="1"><path d="M18 450 Q67 620 142 825 M1072 33 Q1197 270 1267 410 Q1317 560 1397 790" /></g>
      <path d="M890 33 L1020 370 L1200 825 M21 190 L340 75 Q375 68 395 95 L470 270 M575 450 L740 395 M780 370 L1010 300 M1017 370 L1100 345 Q1150 340 1180 352 Q1240 350 1425 272 M790 448 L1000 360 M835 563 L920 825 M575 572 L665 825" fill="none" stroke="#d9cf8c" strokeWidth="11" />
      <path d="M890 33 L1020 370 L1200 825 M21 190 L340 75 Q375 68 395 95 L470 270 M575 450 L740 395 M780 370 L1010 300 M1017 370 L1100 345 Q1150 340 1180 352 Q1240 350 1425 272 M790 448 L1000 360 M835 563 L920 825 M575 572 L665 825 M755 455 Q790 460 790 430 L770 390 Q800 370 830 372" fill="none" stroke="#f6f3b4" strokeWidth="7" />
      <path d="M122 33 L290 490 Q310 570 360 640 L402 630 M360 640 Q320 635 290 650 L245 690" fill="none" stroke="#f4c493" strokeWidth="10" />
      <path d="M21 655 Q90 640 180 670 L300 705 Q370 730 405 825" fill="none" stroke="#e99c85" strokeWidth="13" />
      <path d="M21 655 Q90 640 180 670 L300 705 Q370 730 405 825" fill="none" stroke="#f5b9a4" strokeWidth="8" />
      <path d="M940 640 L1020 760 M1030 600 L1420 740 M640 800 L830 770 M660 200 Q690 260 630 300" stroke="#b7b3e3" strokeWidth="2" strokeDasharray="4 4" fill="none" />
      {trees.map(([x, y]) => (
        <g key={`${x}-${y}`}><circle cx={x} cy={y} r="10" fill="#e9f6e7" stroke="#a8cfa5" /><path d={`M${x} ${y - 6} L${x + 5} ${y + 3} H${x - 5}Z M${x - 1} ${y + 2} h2 v4 h-2z`} fill="#4fa45a" /></g>
      ))}
      <g fontSize="20" textAnchor="middle">
        <text x="695" y="420" fill="#2d2d2d" fontSize="20">Kawartha Lakes</text>
        <text x="770" y="508" fill="#4a4a4a">Lindsay</text>
        <g fontSize="16">
          <text x="532" y="190" fill="#4c8a57">Mayor James</text><text x="532" y="208" fill="#4c8a57">Flynn Park</text>
          <text x="695" y="146" fill="#4c8a57">Pioneer Park</text><text x="670" y="82" fill="#4d7fc0">Scugog River</text>
          <text x="367" y="471" fill="#5a5a52">Sugarwood</text>
          <g fill="#5b4fb0" fontSize="14"><text x="108" y="357">Lindsay</text><text x="108" y="372">Airport</text><text x="108" y="388">(CNF4)</text></g>
          <path d="M108 326 L110 333 L117 337 V339 L110 337 L109 342 H107 L106 337 L99 339 V337 L106 333Z" fill="#7a5fd0" />
          <g fill="#6d5a3f"><text x="1081" y="397">I. E. Weldon</text><text x="1081" y="415">Secondary</text><text x="1081" y="432">School</text></g>
          <text x="832" y="771" fill="#4a6b4e" fontSize="14">St. Mary's</text><text x="832" y="784" fill="#4a6b4e" fontSize="12">Cemetery</text>
          <text x="768" y="819" fill="#55503c" fontSize="15">College - Frost</text>
          <text x="980" y="285" fill="#555" fontSize="12" transform="rotate(69 980 285)">Verulam Road North</text>
          <text x="885" y="345" fill="#555" fontSize="13" transform="rotate(-18 885 345)">Colborne Street East</text>
          <text x="1342" y="560" fill="#666" fontSize="12" transform="rotate(70 1342 560)">Fieldside Road</text>
        </g>
      </g>
      <Badge x={235} y={110} t="4" fill="#f6ead0" />
      <Badge x={262} y={427} t="35" fill="#f6dcc0" />
      <Badge x={295} y={656} t="7B;35" fill="#f6dcc0" />
      <Badge x={113} y={653} t="7" fill="#f5cdb8" />
      <Badge x={342} y={733} t="7;35" fill="#f5cdb8" />
      <Badge x={1104} y={342} t="17" fill="#f6f0cf" />
      <Badge x={1138} y={722} t="36" fill="#f6f0cf" />
      <Route d={GREEN} color="#4fdc14" w={6} dots="#158a8c" />
      <Route d={ORANGE} color="#ff5a0a" w={8} dots="#f07818" />
      <Route d={BLUE} color="#1a56dc" w={4.500} dots="#1250b4" />
      <Route d={RED} color="#de1018" w={4} dots="#d40c14" />
      <circle cx="446" cy="631" r="6" fill="#d81018" /><circle cx="527" cy="508" r="4" fill="#1a6fc0" />
      <g fontSize="14" fill="#777" textAnchor="end">
        <text x="1422" y="796" textLength="700" lengthAdjust="spacingAndGlyphs">Map data © OpenStreetMap contributors, Microsoft, Facebook, Inc. and its affiliates, Esri Community Maps</text>
        <text x="1422" y="814" textLength="200" lengthAdjust="spacingAndGlyphs">contributors, Map layer by Esri</text>
      </g>
    </svg>
  );
}

function Splash() {
  return (
    <div className="absolute left-[433px] top-[182px] flex h-[494px] w-[472px] flex-col border-2 border-[#cfcfcf] bg-[#efefef] shadow-[0_0_4px_4px_rgba(0,0,0,0.18)]">
      <CityMap />
      <div className="mt-[14px] text-center text-[21px] font-semibold leading-[28px] text-[#151515]">Lindsay Transit</div>
      <div className="mt-[7px] text-center text-[15.5px] leading-[21px] text-[#4a4a4a]">Explore Lindsay, Ontario, using the City of Kawartha Lakes'<br />public transit system.</div>
      <div className="mt-[21px] text-center text-[13px] italic leading-[18px] tracking-[0.1px] text-[#4a4a4a]">This Experience was created by Group 2 for GEOM99 Web GIS<br />Development course at Fleming College.</div>
      <div className="mt-[30px] flex items-center pl-4 pr-4">
        <i className="mb-[3px] h-4 w-4 rounded-[1px] border-2 border-[#a8a8a8] bg-white" />
        <span className="mb-[7px] ml-[8px] text-[13.5px] tracking-[0.05px] text-[#3a3a3a]">I agree to the above terms and conditions</span>
        <span className="ml-auto flex h-8 w-[100px] items-center justify-center rounded-[2px] bg-[#e1e1e1] pb-[2px] text-[13px] text-[#949494]">Close</span>
      </div>
      <i className="absolute left-[219px] top-[-2px] h-[4px] w-[38px] border border-white bg-black" />
      <i className="absolute bottom-[-2px] left-[219px] h-[4px] w-[38px] border border-white bg-black" />
      <i className="absolute left-[-2px] top-[226px] h-[38px] w-[4px] border border-white bg-black" />
      <i className="absolute left-[474px] top-[226px] h-[38px] w-[4px] border border-white bg-black" />
    </div>
  );
}

/* ---------- settings panel ---------- */

function Toggle() {
  return <span className="flex h-4 w-7 items-center justify-end rounded-full bg-[#00aabb] pr-[3px]"><i className="h-[10px] w-[10px] rounded-full bg-[#282828]" /></span>;
}

function PxInput({ value }: { value: string }) {
  return (
    <span className="flex h-[26px] text-white">
      <span className="flex w-[54px] items-center rounded-l-[2px] bg-[#181818] pb-[2px] pl-[7px]">{value}</span>
      <span className="flex w-[26px] items-center justify-center rounded-r-[2px] bg-[#434343]">px</span>
    </span>
  );
}

function SettingsPanel() {
  return (
    <div className="flex w-[261px] shrink-0 flex-col border-l border-[#6a6a6a] bg-[#282828] text-[13.5px] text-[#a8a8a8]">
      <div className="flex h-[59px] shrink-0 items-center border-b border-[#6a6a6a] pl-4">
        <span className="flex h-[26px] w-[26px] items-center justify-center border border-[#6a6a6a]">
          <svg width="16" height="16" viewBox="0 0 16 16" fill="none" stroke="#c8c8c8" strokeWidth="1.200"><path d="M.6 .6 H15.400 V11.500 H4.500 L.6 15Z M4 4.500 H12 M4 7.500 H12" /></svg>
        </span>
        <span className="ml-[11px] text-[16.5px] tracking-[0.25px] text-[#d0d0d0]">Splash</span>
        <span className="ml-auto mr-[20px] flex h-4 w-4 items-center justify-center rounded-full border border-[#a8a8a8] text-[12px] leading-none">?</span>
      </div>
      <div className="flex min-h-0 flex-1">
        <div className="w-[249px]">
          <div className="flex h-[23px] items-center justify-between px-4"><span className="mb-[3px] text-[14px] font-semibold tracking-[0.3px] text-[#c8c8c8]">Block page</span><Toggle /></div>
          <div className="flex h-[57px] items-center justify-between px-4"><span className="mb-[4px]">Mask color</span>
            <span className="flex h-[26px] w-[30px] items-center justify-center bg-[#181818]"><i className="h-[18px] w-[22px] border border-[#434343] bg-black" /></span>
          </div>
          <div className="h-px bg-[#6a6a6a]" />
          <div className="flex h-[52px] items-center px-4 pb-px text-[14.5px] text-[#c8c8c8]">Close options</div>
          <div className="flex h-[22px] items-center px-4 text-white"><i className="mr-2 h-4 w-4 border-2 border-[#a8a8a8]" /><span className="mb-[3px]">Click outside to close Window</span></div>
          <div className="flex h-[48px] items-center justify-between px-4"><span className="mb-[2px]">Interaction</span><Toggle /></div>
          <div className="flex h-[22px] items-center px-4 pb-[2px]">Style</div>
          <div className="mt-4 flex gap-[5px] px-4">
            <span className="flex h-[30px] w-[69px] items-center rounded-[2px] bg-[#181818] pb-[2px] pl-[6px]"><i className="h-[6px] w-[6px] rounded-[2px] bg-[#6a6a6a]" /><i className="ml-[3px] h-1 w-[48px] bg-[#6a6a6a]" /></span>
            <span className="flex h-[30px] w-[69px] items-center rounded-[2px] border-2 border-[#00aabb] bg-[#181818] pb-[2px] pl-[4px]"><i className="h-[6px] w-[6px] rounded-[2px] bg-[#6a6a6a]" /><i className="ml-[3px] h-1 w-[32px] bg-[#6a6a6a]" /><i className="ml-[4px] h-[6px] w-[13px] rounded-[2px] bg-[#6a6a6a]" /></span>
            <span className="flex h-[30px] w-[69px] items-center rounded-[2px] bg-[#181818] pb-[2px] pl-[6px]"><i className="h-[6px] w-[6px] rounded-[2px] bg-[#6a6a6a]" /><i className="ml-[3px] h-1 w-[32px] bg-[#6a6a6a]" /><i className="ml-[3px] mt-[14px] h-[6px] w-[13px] rounded-[2px] bg-[#6a6a6a]" /></span>
          </div>
          <div className="flex h-[48px] items-center px-4">Type</div>
          <div className="flex h-4 items-center px-4 text-white">
            <span className="mr-2 flex h-4 w-4 items-center justify-center rounded-full border-2 border-[#00aabb]"><i className="h-2 w-2 rounded-full bg-[#00aabb]" /></span>
            <span className="mb-[2px] text-[14px] font-semibold tracking-[0.3px]">Confirmation</span>
            <svg width="14" height="8" viewBox="0 0 14 8" className="ml-auto mr-[2px]"><path d="M1 7.500 L7 1.500 L13 7.500" fill="none" stroke="#d0d0d0" strokeWidth="1.200" /></svg>
          </div>
          <div className="px-5">
            <div className="mt-3 flex h-[37px] items-center pb-[3px] tracking-[0.1px]">Checkbox text</div>
            <div className="relative h-[60px] rounded-[2px] bg-[#181818] pl-[7px] pt-[4px] text-[14.5px] leading-[21px] text-white">I agree to the above terms<br />and conditions
              <svg width="8" height="8" viewBox="0 0 8 8" className="absolute bottom-[1px] right-[2px]"><path d="M0 8 L8 0 M4.500 8 L8 4.500" stroke="#b0b0b0" /></svg>
            </div>
            <div className="mt-2 flex h-[26px] items-center justify-between"><span className="mb-[3px]">Font size</span><PxInput value="13" /></div>
            <div className="flex h-[35px] items-center pb-[2px]">Button text</div>
            <div className="flex h-[26px] items-center rounded-[2px] bg-[#181818] pb-[3px] pl-[7px] text-white">OK</div>
            <div className="mt-4 flex h-[26px] items-center justify-between"><span className="mb-[3px]">Font size</span><PxInput value="12" /></div>
            <div className="mt-[10px] flex h-4 items-center text-white">
              <span className="mr-2 flex h-4 w-4 items-center justify-center rounded-[1px] bg-[#00aabb]"><svg width="12" height="10" viewBox="0 0 12 10"><path d="M1 5 L4.500 8.500 L11 1" fill="none" stroke="#1a1a1a" strokeWidth="1.500" /></svg></span>
              <span className="mb-[3px]">Always show this window</span>
            </div>
          </div>
          <div className="mt-[18px] flex h-[42px] items-center px-4">
            <i className="mr-2 h-4 w-4 rounded-full border-2 border-[#a8a8a8]" />
            <span className="mb-[3px] w-[158px] text-[14px] font-semibold leading-[21px] tracking-[0.2px] text-[#d8d8d8]">"Don't show this again" option</span>
            <svg width="14" height="8" viewBox="0 0 14 8" className="ml-auto mr-[2px]"><path d="M1 .5 L7 6.500 L13 .5" fill="none" stroke="#a8a8a8" strokeWidth="1.200" /></svg>
          </div>
          <div className="mt-4 h-px bg-[#6a6a6a]" />
          <div className="flex h-[53px] items-center px-4 pb-[2px] text-[14.5px] text-[#c8c8c8]">Animation</div>
          <div className="flex px-4">
            <span className="relative h-[72px] w-[90px] rounded-[2px] bg-[#181818]">
              <svg width="90" height="72" viewBox="0 0 90 72"><path d="M16 65 L74 8" stroke="#434343" /></svg>
              <FaStar size={15} className="absolute left-[13px] top-[12px] text-[#6a6a6a]" />
              <FaStar size={15} className="absolute left-[61px] top-[43px] text-[#6a6a6a]" />
            </span>
            <div className="ml-2 flex flex-1 flex-col justify-between text-white">
              <div className="flex h-[18px] items-center justify-between"><span className="mb-px">None / None</span>
                <span className="mr-[1px] flex h-4 w-4 items-center justify-center rounded-full border border-[#c0c0c0] font-['Liberation_Serif',serif] text-[11px] text-[#c0c0c0]">i</span>
              </div>
              <div className="flex justify-between">
                <span className="flex h-[26px] w-[85px] items-center justify-center rounded-[2px] bg-[#434343] pb-[2px] text-[14px]">Change</span>
                <span className="flex h-[26px] w-[26px] items-center justify-center rounded-[2px] bg-[#434343]"><svg width="10" height="10" viewBox="0 0 10 10"><path d="M1 .8 L9 5 L1 9.200Z" fill="none" stroke="#d0d0d0" /></svg></span>
              </div>
            </div>
          </div>
        </div>
        <div className="flex w-[11px] flex-col items-center">
          <i className="mt-[6px] border-x-[3px] border-b-[3px] border-x-transparent border-b-[#6a6a6a]" />
          <i className="mt-[182px] h-[491px] w-[7px] bg-[#555]" />
          <i className="mt-[126px] border-x-[3px] border-t-[3px] border-x-transparent border-t-[#6a6a6a]" />
        </div>
      </div>
    </div>
  );
}

function StatusBar() {
  return (
    <div className="flex h-[21px] items-center border-t border-[#6a6a6a] bg-[#434343] text-[13px] tracking-[0.2px] text-[#a8a8a8]">
      <span className="ml-[17px] w-[58px] text-[#d0d0d0]">Window:</span>
      <span className="mb-[2px] w-[42px]">Splash</span>
      <ChevronDown size={12} strokeWidth={1.6} />
      <span className="ml-auto w-[43px] text-[#c0c0c0]">A11Y</span>
      <Minus size={13} strokeWidth={1.2} />
      <span className="ml-[9px] flex w-[130px] items-center">
        <i className="h-[2px] w-[59px] bg-[#e0e0e0]" />
        <i className="h-[11px] w-[11px] rounded-full border-2 border-[#e0e0e0] bg-[#282828]" />
        <i className="h-px flex-1 bg-[#6a6a6a]" />
      </span>
      <Plus size={14} strokeWidth={1.2} className="ml-[7px] text-[#c0c0c0]" />
      <span className="mb-[2px] ml-[13px] w-[39px] whitespace-nowrap">100%</span>
      <ChevronDown size={11} strokeWidth={1.6} />
      <svg width="12" height="12" viewBox="0 0 12 12" fill="none" stroke="#a8a8a8" className="ml-[12px]"><path d="M.5 4 V.5 H4 M8 .5 H11.500 V4 M11.500 8 V11.500 H8 M4 11.500 H.5 V8 M6 1 V3.500 M6 8.500 V11 M1 6 H3.500 M8.500 6 H11" /></svg>
      <svg width="12" height="12" viewBox="0 0 12 12" fill="none" stroke="#a8a8a8" className="ml-[10px]"><path d="M.5 3.500 V.5 H11.500 V3.500 M.5 8.500 V11.500 H11.500 V8.500 M1 6 H4.500 M7.500 6 H11 M3 4.500 L1 6 L3 7.500 M9 4.500 L11 6 L9 7.500" /></svg>
      <span className="ml-[21px] mr-[8px] flex h-5 w-[30px] items-center justify-center bg-[#626262]"><i className="h-[12px] w-[12px] border border-r-[4px] border-white" /></span>
    </div>
  );
}

export default function App() {
  return (
    <div className="flex h-[1033px] w-[1921px] flex-col overflow-hidden bg-black font-[Lato,'Open_Sans',sans-serif] leading-normal">
      <Browser />
      <BuilderHeader />
      <div className="flex h-[875px]">
        <Rail />
        <InsertPanel />
        <div className="relative flex flex-1 overflow-hidden bg-[#181818] pl-[29px] pt-[29px]">
          <PreviewPage />
          <Splash />
          <div className="-mt-[29px] ml-auto flex w-[9px] flex-col items-center pr-px">
            <i className="mt-[5px] border-x-[3px] border-b-[3px] border-x-transparent border-b-[#6a6a6a]" />
            <i className="mt-[3px] h-[829px] w-[7px] bg-[#555]" />
            <i className="mt-[27px] border-x-[3px] border-t-[3px] border-x-transparent border-t-[#6a6a6a]" />
          </div>
        </div>
        <SettingsPanel />
      </div>
      <StatusBar />
    </div>
  );
}
